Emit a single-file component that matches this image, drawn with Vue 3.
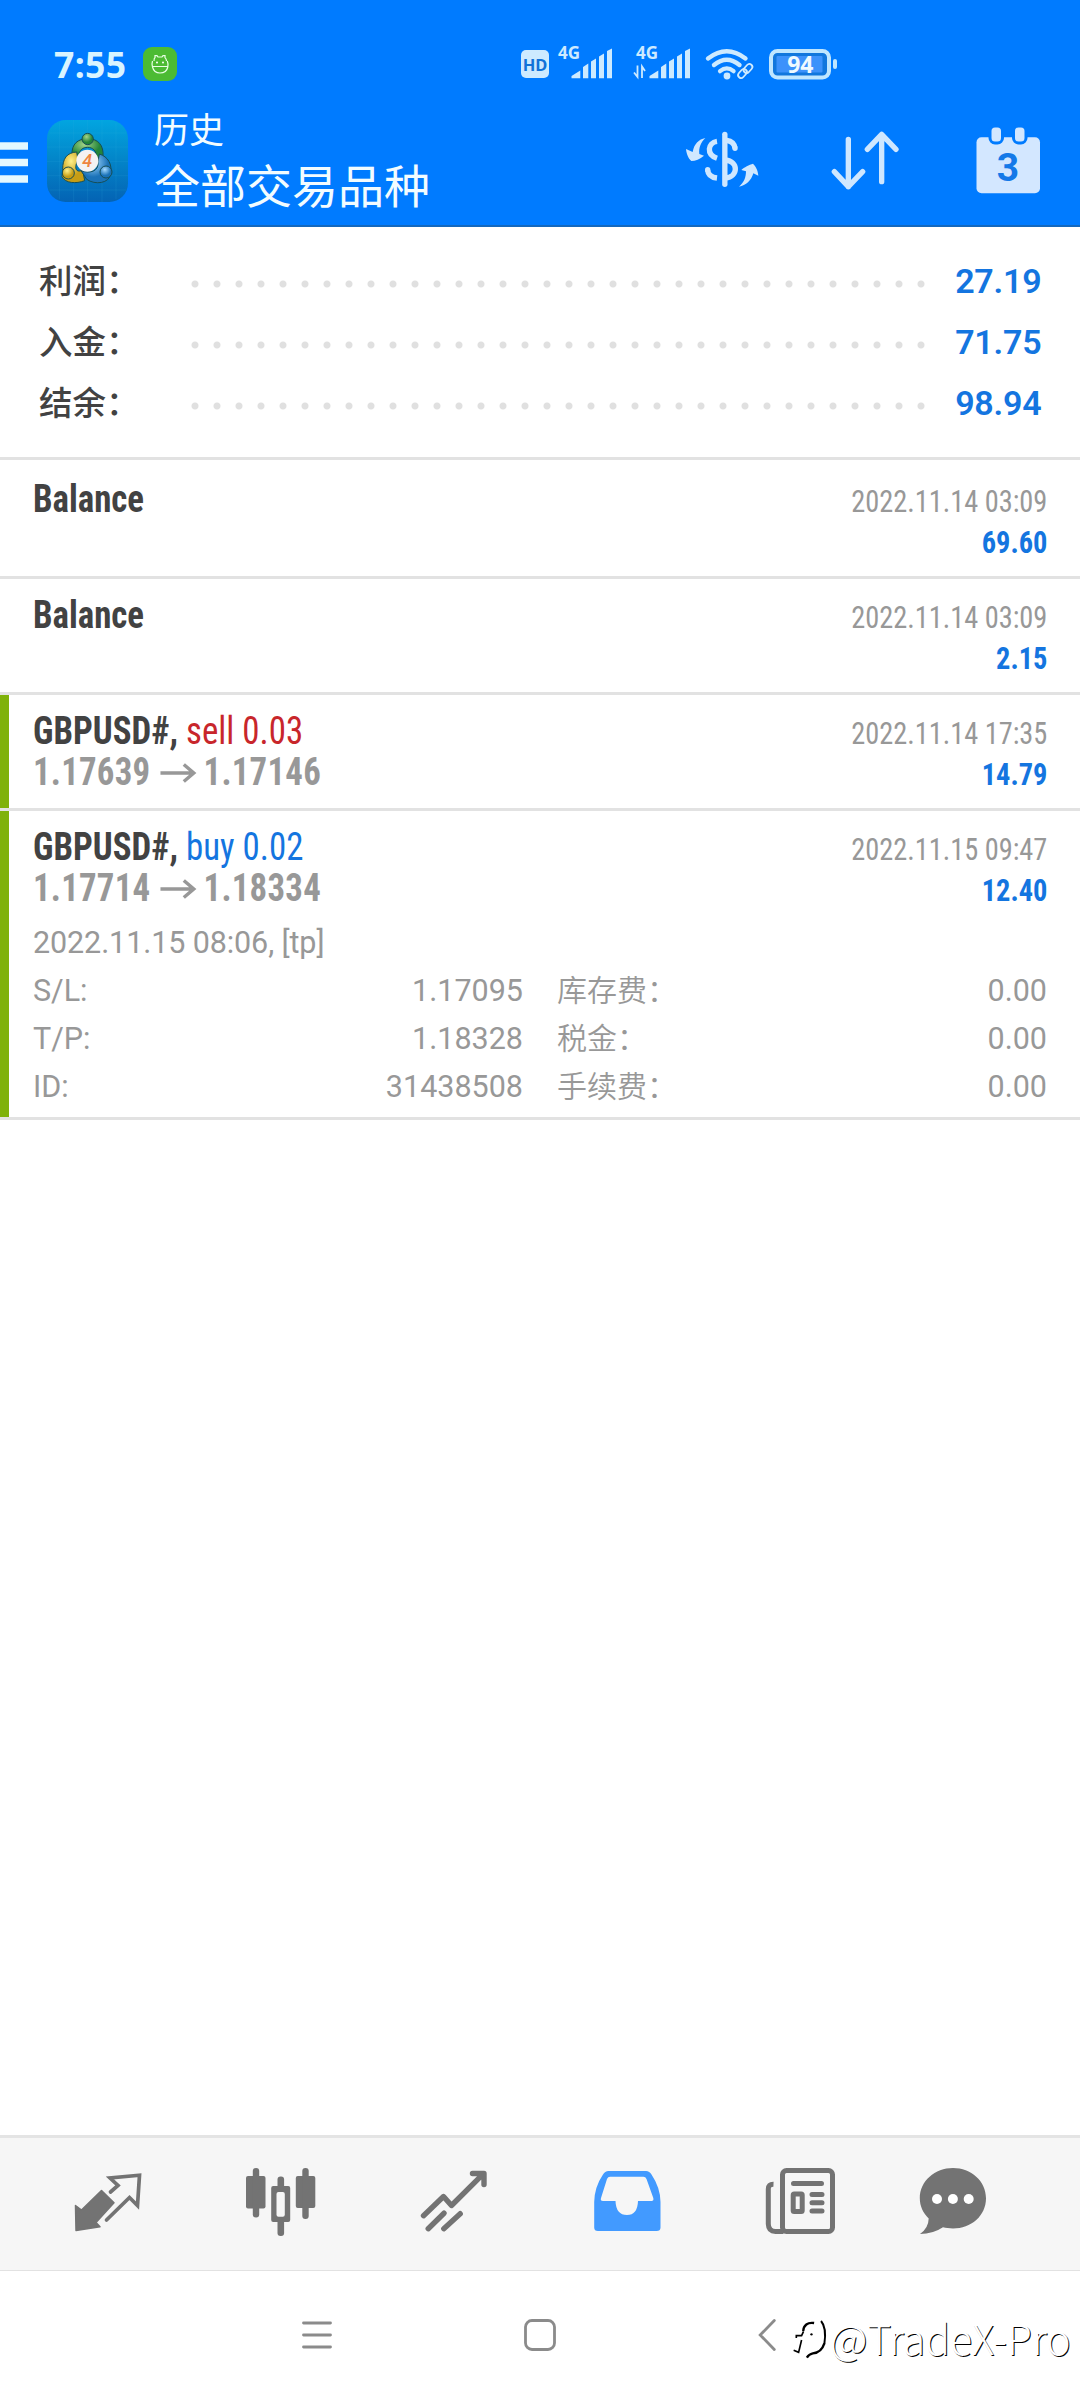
<script setup>
const summary = [
  { label: '利润：', value: '27.19' },
  { label: '入金：', value: '71.75' },
  { label: '结余：', value: '98.94' },
]

const deals = [
  { title: 'Balance', time: '2022.11.14 03:09', profit: '69.60' },
  { title: 'Balance', time: '2022.11.14 03:09', profit: '2.15' },
  {
    title: 'GBPUSD#,', side: 'sell', volume: '0.03', open: '1.17639', close: '1.17146',
    time: '2022.11.14 17:35', profit: '14.79',
  },
  {
    title: 'GBPUSD#,', side: 'buy', volume: '0.02', open: '1.17714', close: '1.18334',
    time: '2022.11.15 09:47', profit: '12.40',
    comment: '2022.11.15 08:06, [tp]',
    details: [
      ['S/L:', '1.17095', '库存费：', '0.00'],
      ['T/P:', '1.18328', '税金：', '0.00'],
      ['ID:', '31438508', '手续费：', '0.00'],
    ],
  },
]
</script>

<template>
  <div class="screen">
    <header class="header">
      <div class="status">
        <span class="time">7:55</span>
        <svg class="robot" width="34" height="34" viewBox="0 0 34 34">
          <rect width="34" height="34" rx="9" fill="#4cbb33" />
          <g fill="none" stroke="#e8ffe4" stroke-width="1.2">
            <path d="M11 14 Q11 11 12 10.6 V8.6 H14 L15 10 H19 L20 8.600 H22 V10.6 Q23.500 12 23.500 14" />
            <path d="M9.500 14 Q8.500 17 9.500 20 Q11 26 17 26 Q23.500 26 24.800 20 Q25.500 17 24.300 14 M9.500 19.500 H24.800" />
          </g>
          <circle cx="14" cy="15.500" r="1" fill="#fff" /><circle cx="20" cy="15.500" r="1" fill="#fff" />
        </svg>
        <svg class="indicators" width="330" height="50" viewBox="515 40 330 50">
          <rect x="521" y="50" width="28" height="28" rx="5" fill="#cdeaff" />
          <text x="535" y="70.500" font-size="16.500" text-anchor="middle" class="glyph" fill="#1272d8">HD</text>
          <g v-for="dx in [0, 78]" :key="dx" :transform="`translate(${dx} 0)`" fill="#cdeaff">
            <text x="558" y="59" font-size="17" class="glyph">4G</text>
            <path d="M571.500 78.300 V76 L580.300 70.500 V78.300Z M583 78.300 V67 L588.300 63.500 V78.300Z M591 78.300 V61.500 L596 58.500 V78.300Z M599 78.300 V56.500 L604 53.500 V78.300Z M607 78.300 V51 L612 48.500 V78.300Z" />
          </g>
          <path d="M637.500 65.500 V77 L634 72.500 M642 78 V66.500 L645 71" fill="none" stroke="#cdeaff" stroke-width="1.8" />
          <g fill="none" stroke="#cdeaff">
            <path d="M708 58.500 Q726.800 44 745.500 58.500" stroke-width="4.400" stroke-linecap="round" />
            <path d="M714 65 Q726.800 54.500 739.500 65" stroke-width="4.400" stroke-linecap="round" />
            <path d="M720 71.200 Q726.800 65.500 733.600 71.200" stroke-width="4.200" stroke-linecap="round" />
          </g>
          <circle cx="727" cy="76" r="3.400" fill="#cdeaff" />
          <g fill="none" stroke="#0078fb" stroke-width="5">
            <rect x="-5" y="-3" width="10" height="6" rx="3" transform="translate(742.5 73.5) rotate(-48)" />
            <rect x="-5" y="-3" width="10" height="6" rx="3" transform="translate(748 68.5) rotate(-48)" />
          </g>
          <g fill="none" stroke="#cdeaff" stroke-width="1.8">
            <rect x="-5" y="-3" width="10" height="6" rx="3" transform="translate(742.5 73.5) rotate(-48)" />
            <rect x="-5" y="-3" width="10" height="6" rx="3" transform="translate(748 68.5) rotate(-48)" />
          </g>
          <rect x="771" y="51" width="58" height="26.500" rx="6.500" fill="#1177dd" stroke="#bfe6ff" stroke-width="4" />
          <rect x="776.500" y="56" width="46" height="16.500" rx="1" fill="#3c92fb" />
          <text x="800.300" y="73" font-size="23" text-anchor="middle" class="glyph" fill="#effaff">94</text>
          <rect x="833" y="59" width="4" height="10" rx="2" fill="#bfe6ff" />
        </svg>
      </div>

      <div class="titlebar">
        <svg class="burger" width="28" height="42" viewBox="0 0 28 42">
          <path d="M0 4 H28 M0 20.500 H28 M0 37 H28" stroke="#e4f8ff" stroke-width="7.400" />
        </svg>
        <svg class="app-icon" width="81" height="82" viewBox="143 300 243 246">
          <defs>
            <linearGradient id="bg" x1="0" y1="0" x2="0" y2="1"><stop offset="0" stop-color="#02a5e0" /><stop offset=".5" stop-color="#0384c8" /><stop offset="1" stop-color="#0463b4" /></linearGradient>
            <radialGradient id="green" cx=".4" cy=".3"><stop offset="0" stop-color="#a5d488" /><stop offset="1" stop-color="#23853a" /></radialGradient>
            <radialGradient id="gold" cx=".4" cy=".3"><stop offset="0" stop-color="#fff08a" /><stop offset="1" stop-color="#c79d14" /></radialGradient>
            <radialGradient id="sky" cx=".4" cy=".3"><stop offset="0" stop-color="#a5daff" /><stop offset="1" stop-color="#1a72b8" /></radialGradient>
          </defs>
          <rect x="143" y="300" width="243" height="246" rx="56" fill="url(#bg)" />
          <path d="M180 308 V538 M223 300 V546 M265 300 V546 M308 300 V546 M350 308 V538 M150 339 H380 M143 381 H386 M143 424 H386 M143 467 H386 M150 510 H380" stroke="#3db4e6" stroke-opacity=".22" stroke-width="2" fill="none" />
          <g stroke="#174e55" stroke-width="3">
            <path d="M218 405 C216 372 236 356 265 356 C296 356 314 375 311 410 L292 415 C292 392 280 382 265 382 C250 382 240 390 240 405Z" fill="url(#green)" />
            <path d="M232 396 C202 398 190 416 190 448 L188 470 C198 490 230 492 256 482 L250 450 C232 460 222 446 236 420Z" fill="url(#gold)" />
            <path d="M300 402 C326 410 339 432 334 462 C330 490 288 496 262 478 L245 452 C272 462 300 454 296 425Z" fill="url(#sky)" />
            <circle cx="265" cy="357" r="17" fill="url(#green)" />
            <circle cx="207" cy="459" r="18" fill="url(#gold)" />
            <circle cx="320" cy="456" r="18" fill="url(#sky)" />
          </g>
          <circle cx="264" cy="422" r="33" fill="#f4f2f2" />
          <text x="264" y="441" font-size="54" text-anchor="middle" class="four">4</text>
        </svg>
        <div class="titles">
          <div class="subtitle">历史</div>
          <div class="title">全部交易品种</div>
        </div>
        <svg class="act" width="73" height="55" viewBox="48 36 219 165">
          <g fill="none" stroke="#cfe7ff" stroke-width="16">
            <path d="M164.500 43 V193" stroke-linecap="round" />
            <path d="M141 64 C113 68 108 104 141 115" />
            <path d="M113 150 C114 165 124 172 141 174" />
            <path d="M113 150 V149" stroke-linecap="round" />
            <path d="M170 61 C184 63 193 71 195 84" />
            <path d="M195 84 V85" stroke-linecap="round" />
            <path d="M166 120 C206 124 206 170 166 174" />
          </g>
          <path d="M106 54 C86 58 72 72 68 96 L48 87 C50 105 56 116 64 123 C76 123 90 117 102 107 L88 102 C86 84 92 68 106 54Z" fill="#cfe7ff" />
          <path d="M207 200 C228 196 244 182 250 160 L265 167 C264 150 256 138 249 131 C238 134 222 142 214 150 L228 154 C228 172 222 188 207 200Z" fill="#cfe7ff" />
        </svg>
        <svg class="act sort" width="70" height="61" viewBox="480 30 210 183" fill="none" stroke="#cfe7ff" stroke-width="16" stroke-linecap="round" stroke-linejoin="round">
          <path d="M535 58 V200 M493 155 L535 200 L578 155 M635 185 V43 M592 88 L635 43 L678 88" />
        </svg>
        <svg class="act cal" width="65" height="67" viewBox="976 126.500 65 67">
          <rect x="976.500" y="136.700" width="63.500" height="56" rx="5" fill="#d3e7ff" />
          <rect x="990" y="125.500" width="12.500" height="17" rx="5" fill="#d3e7ff" stroke="#007bff" stroke-width="3" />
          <rect x="1013.500" y="125.500" width="12.500" height="17" rx="5" fill="#d3e7ff" stroke="#007bff" stroke-width="3" />
          <text x="1008" y="180.300" font-size="39" text-anchor="middle" class="three">3</text>
        </svg>
      </div>
    </header>

    <section class="summary">
      <div v-for="row in summary" :key="row.label" class="sum-row">
        <span class="sum-label">{{ row.label }}</span>
        <span class="dots"></span>
        <span class="sum-value">{{ row.value }}</span>
      </div>
    </section>

    <main class="deals">
      <article v-for="(deal, i) in deals" :key="i" class="deal">
        <div v-if="deal.side" class="stripe"></div>
        <div class="body">
          <div class="top">
            <div class="left">
              <div class="line"><b>{{ deal.title }}</b><template v-if="deal.side">&nbsp;<span :class="deal.side">{{ deal.side }} {{ deal.volume }}</span></template></div>
              <div v-if="deal.open" class="line price">
                <b>{{ deal.open }}</b>
                <svg width="39" height="20" viewBox="0 0 36 20" preserveAspectRatio="none"><path d="M0 10 H33 M23.500 1.500 L33.500 10 L23.500 18.500" fill="none" stroke="#989898" stroke-width="3.500" /></svg>
                <b>{{ deal.close }}</b>
              </div>
            </div>
            <div class="right">
              <div class="when">{{ deal.time }}</div>
              <div class="profit">{{ deal.profit }}</div>
            </div>
          </div>
          <div v-if="deal.comment" class="extra">
            <div class="comment">{{ deal.comment }}</div>
            <div v-for="d in deal.details" :key="d[0]" class="detail">
              <span>{{ d[0] }}</span><span class="num">{{ d[1] }}</span>
              <span class="cn">{{ d[2] }}</span><span class="num">{{ d[3] }}</span>
            </div>
          </div>
        </div>
      </article>
    </main>

    <nav class="tabs">
      <svg viewBox="70.5 2168 76 72">
        <path d="M102 2190.500 L114.500 2202.700 L96.500 2222.500 L100.500 2226.700 L76.500 2230.500 L76 2205.500 L82 2210Z" fill="#737373" stroke="#737373" stroke-width="1.500" stroke-linejoin="round" />
        <path d="M111 2192 L118.500 2185.500 L110.500 2178 L140 2175.200 L138 2205.500 L130 2197.500 L107 2220" fill="none" stroke="#737373" stroke-width="3.700" stroke-linecap="round" />
      </svg>
      <svg viewBox="243.500 2168 76 72" fill="#737373">
        <rect x="246.500" y="2176" width="19.500" height="32.500" rx="2" /><rect x="253.300" y="2168" width="6.400" height="49.500" rx="3" />
        <rect x="278" y="2176.500" width="6.600" height="59.500" rx="3" /><rect x="271.700" y="2186" width="19" height="36" rx="2" />
        <rect x="277" y="2192" width="8.300" height="24.700" rx="2" fill="#f6f6f6" />
        <rect x="296.300" y="2176" width="19.500" height="32" rx="2" /><rect x="302.800" y="2168" width="6.400" height="51" rx="3" />
      </svg>
      <svg viewBox="416.500 2168 76 72" fill="none" stroke="#737373" stroke-width="5.400" stroke-linecap="round" stroke-linejoin="round">
        <path d="M424 2215.700 L444 2196.500 L452 2205.500 L484 2173.700 M473 2173.500 H484.500 V2184.500 M428.700 2228.700 L444.500 2213.200 M444.300 2228.700 L460.700 2213.700" />
      </svg>
      <svg viewBox="589.500 2168 76 72">
        <path fill="#429aff" fill-rule="evenodd" d="M609 2171 H646.500 Q650 2171 652 2174.500 Q661 2188 661 2202 V2227.500 Q661 2231 657 2231 H598.500 Q594.700 2231 594.700 2227.500 V2202 Q595 2187 603.500 2174.500 Q605.500 2171 609 2171Z M610.500 2176.700 Q608.500 2176.700 607.500 2179 L601.500 2198 Q600.500 2201 603.500 2201 H616 Q616.500 2215 627.500 2215 Q638 2215 638.500 2201 H652 Q654.500 2201 653.800 2198 L647 2179 Q646 2176.700 644 2176.700Z" />
      </svg>
      <svg viewBox="762.500 2168 76 72" fill="none" stroke="#737373" stroke-width="5" stroke-linecap="round">
        <rect x="783" y="2170.500" width="50" height="61" rx="4" />
        <path d="M774 2184.200 Q768.800 2184 768.800 2189 V2224 Q769 2231.500 776 2231.500 H784" stroke-linecap="butt" />
        <path d="M794 2183.500 H822 M812.500 2194.500 H822.500 M812.500 2202.700 H822.500 M812.500 2211 H822.500" />
        <rect x="793.700" y="2194" width="9" height="17.500" rx="1" />
      </svg>
      <svg viewBox="915 2168 76 72">
        <path d="M953 2168 C971 2168 986 2181 986 2198.300 C986 2216 971 2228.500 953 2228.500 C949 2228.500 946 2228 943 2227.300 Q933 2234 920 2234 Q928.500 2228 928.700 2218.500 C923 2213 919.800 2206 919.800 2198.300 C919.800 2181 935 2168 953 2168Z" fill="#737373" />
        <circle cx="937" cy="2199" r="5" fill="#fff" /><circle cx="952.900" cy="2199" r="5" fill="#fff" /><circle cx="968.700" cy="2199" r="5" fill="#fff" />
      </svg>
    </nav>

    <footer class="sysnav">
      <svg width="30" height="28" viewBox="0 0 30 28"><path d="M1.500 2 H28.500 M1.500 14 H28.500 M1.500 26 H28.500" stroke="#8b8b8b" stroke-width="2.800" stroke-linecap="round" /></svg>
      <svg width="32" height="32" viewBox="0 0 32 32"><rect x="1.500" y="1.500" width="29" height="29" rx="6.500" fill="none" stroke="#8b8b8b" stroke-width="2.800" /></svg>
      <svg width="18" height="32" viewBox="0 0 18 32"><path d="M16.300 1.500 L2.200 16 L16.300 30.500" fill="none" stroke="#8b8b8b" stroke-width="2.800" stroke-linecap="round" /></svg>
      <div class="mark">
        <svg width="33" height="40" viewBox="40 75 100 120" preserveAspectRatio="none">
          <g fill="none" stroke="#000">
            <path d="M104 87 C84 84 72 94 71 111" stroke-width="7" /><path d="M72 112 L66 125 H50 V132" stroke-width="5" />
            <path d="M66 138 L57 175 L42 169" stroke-width="5" />
            <path d="M125 81 C140 98 139 124 135 150" stroke-width="6" />
            <path d="M135 148 C128 170 112 177 100 178 C90 180 86 184 82 191" stroke-width="7" />
          </g>
          <circle cx="96" cy="121" r="3.500" />
        </svg>
        <span>@TradeX-Pro</span>
      </div>
    </footer>
  </div>
</template>

<style>
body { background: #fff; }
</style>

<style scoped>
.screen {
  width: 1080px;
  height: 2400px;
  display: flex;
  flex-direction: column;
  background: #fff;
  overflow: hidden;
  font-family: Roboto, "Noto Sans CJK SC", sans-serif;
}
svg { display: block; overflow: visible; }
.header {
  height: 225px;
  flex: none;
  background: #007bff;
  border-bottom: 2px solid #1468bd;
}
.status {
  display: grid;
  grid-template-columns: 143px 372px 330px;
  height: 105px;
}
.time {
  padding: 39px 0 0 54px;
  font: 700 35.5px/50px "Noto Sans", sans-serif;
  letter-spacing: 0.4px;
  color: #d9f4ff;
}
.robot { margin-top: 47px; }
.indicators { margin-top: 40px; }
.glyph { font-family: "Noto Sans", sans-serif; font-weight: 700; }
.four { font-family: Roboto, sans-serif; font-style: italic; fill: #ee8540; font-weight: 500; }
.three { font-family: Roboto, sans-serif; font-weight: 700; fill: #1479e8; }
.titlebar {
  display: grid;
  grid-template-columns: 47px 107px 532px 144px 146px 104px;
  height: 120px;
}
.burger { margin-top: 37px; }
.app-icon { margin-top: 15px; }
.titles {
  font-family: "Noto Sans CJK SC", sans-serif;
  font-weight: 370;
  color: #f2fcff;
  white-space: nowrap;
}
.subtitle { font-size: 35px; line-height: 45px; }
.title { font-size: 46px; line-height: 66px; }
.act { margin-top: 27px; }
.sort { margin-top: 25px; }
.cal { margin-top: 21.5px; }

.summary {
  flex: none;
  height: 230px;
  border-bottom: 3px solid #e2e2e2;
}
.summary::before { content: ""; display: block; height: 23px; }
.sum-row {
  display: flex;
  align-items: center;
  height: 61px;
  padding: 0 38.5px 0 39px;
}
.sum-label {
  width: 152px;
  padding-bottom: 3px;
  font: 500 33.5px/48px "Noto Sans CJK SC", sans-serif;
  color: #424242;
  white-space: nowrap;
}
.dots {
  width: 748px;
  height: 8px;
  margin-top: 7px;
  background: radial-gradient(circle at 4px 4px, #e0e0e0 3px, transparent 4px) 0 0 / 22px 8px repeat-x;
}
.sum-value {
  margin-left: auto;
  font-size: 34px;
  font-weight: 600;
  letter-spacing: -0.2px;
  color: #1475e0;
}

.deals { flex: 1; }
.deal {
  position: relative;
  display: flex;
  border-top: 3px solid #e2e2e2;
  min-height: 113px;
}
.deal:first-child { border-top-color: transparent; }
.deal:last-child { border-bottom: 3px solid #e2e2e2; min-height: 306px; }
.stripe {
  position: absolute;
  left: 0;
  top: 0;
  bottom: 0;
  width: 9px;
  background: #7fb20a;
}
.body { flex: 1; padding: 16px 33px 0 33px; }
.top {
  display: flex;
  justify-content: space-between;
  font-family: "Roboto Condensed", Roboto, sans-serif;
  white-space: nowrap;
}
.left {
  height: 82px;
  transform: scaleX(0.917);
  transform-origin: 0 0;
}
.line { font-size: 38px; line-height: 41px; color: #424242; }
.line b { font-weight: 700; }
.line .sell { color: #c8262b; }
.line .buy { color: #1475e0; }
.price { display: flex; align-items: center; color: #989898; letter-spacing: 0.25px; }
.price svg { margin: 0 8px 0 11px; }
.right {
  padding-top: 1.5px;
  height: 79px;
  font-size: 31px;
  line-height: 41px;
  text-align: right;
  transform: scaleX(0.915);
  transform-origin: 100% 0;
}
.when { color: #989898; }
.profit { font-weight: 700; color: #1475e0; }
.extra {
  padding-top: 10px;
  font-size: 30.5px;
  line-height: 48px;
  color: #989898;
}
.comment { letter-spacing: -0.1px; }
.detail {
  display: grid;
  grid-template-columns: 80px 410px 200px 1fr;
  height: 48px;
}
.num { text-align: right; }
.cn {
  padding-left: 34px;
  font: 350 30px/43px "Noto Sans CJK SC", sans-serif;
}

.tabs {
  flex: none;
  display: grid;
  grid-template-columns: repeat(5, 173px) 133px;
  justify-items: center;
  padding: 30px 39px 0 21px;
  height: 102px;
  background: #f6f6f6;
  border-top: 3px solid #e4e4e4;
  border-bottom: 1px solid #e2e2e2;
}
.tabs svg { width: 76px; height: 72px; }
.sysnav {
  position: relative;
  flex: none;
  display: flex;
  align-items: center;
  height: 129px;
  box-sizing: border-box;
  padding: 0 0 2px 302px;
}
.sysnav > svg:nth-child(2) { margin-left: 192px; }
.sysnav > svg:nth-child(3) { margin-left: 202px; }
.mark {
  position: absolute;
  left: 793px;
  top: 38px;
  display: flex;
  align-items: center;
  font: 300 41px/56px "Noto Sans CJK SC", sans-serif;
  color: #fff;
  white-space: nowrap;
}
.mark svg { margin-top: 4px; }
.mark span { margin-left: 4px; text-shadow: 1px 1px 0 #000; }
</style>
